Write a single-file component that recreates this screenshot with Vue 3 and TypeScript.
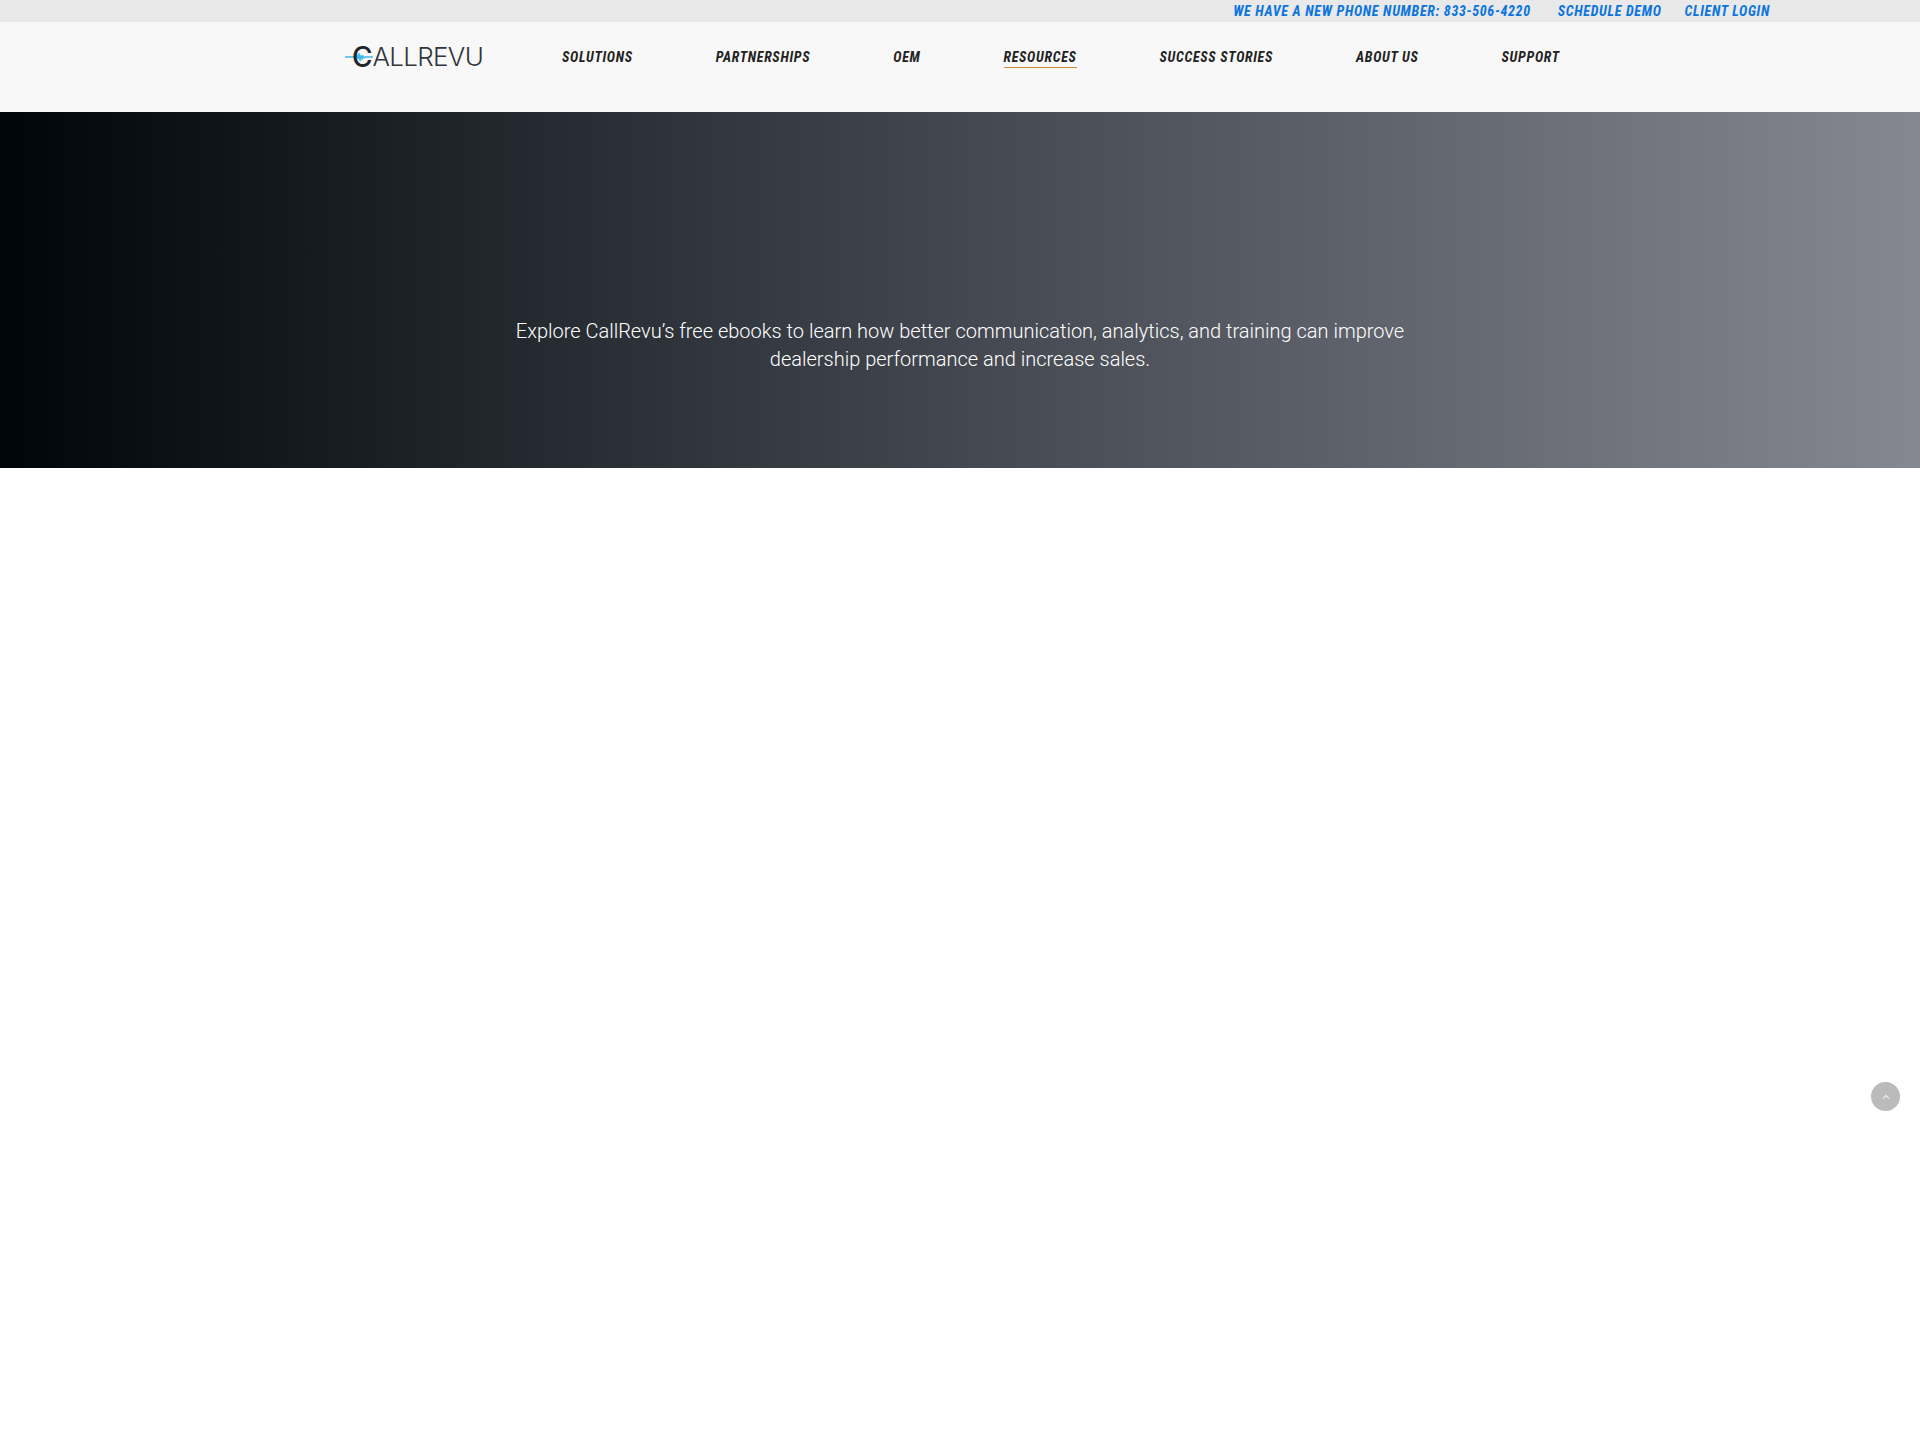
<script setup lang="ts">
const navItems: string[] = ['SOLUTIONS', 'PARTNERSHIPS', 'OEM', 'RESOURCES', 'SUCCESS STORIES', 'ABOUT US', 'SUPPORT']
</script>

<template>
  <div class="page">
    <div class="topbar">
      <a class="top-link phone">WE HAVE A NEW PHONE NUMBER: 833-506-4220</a>
      <a class="top-link demo">SCHEDULE DEMO</a>
      <a class="top-link">CLIENT LOGIN</a>
    </div>
    <header class="header">
      <div class="logo">
        <svg class="wave" width="36" height="14" viewBox="0 0 36 14">
          <path d="M0 7H9l1-1 1 2 1-3 1 4 1-6 1 8 1-6 1 4 1-3 1 2 1-1H28" fill="none" stroke="#3db8ee" stroke-width="1.3" />
        </svg>
        <span class="logo-c">C</span><span class="logo-rest">ALLREVU</span>
      </div>
      <nav class="nav">
        <a v-for="item in navItems" :key="item" class="nav-item" :class="{ active: item === 'RESOURCES' }">{{ item }}</a>
      </nav>
    </header>
    <section class="hero">
      <p class="hero-text">Explore CallRevu’s free ebooks to learn how better communication, analytics, and training can improve<br />dealership performance and increase sales.</p>
    </section>
    <button class="to-top" aria-label="Back to top">
      <svg width="8" height="6" viewBox="0 0 8 6"><path d="M1 4.500 4 1.500 7 4.500" fill="none" stroke="#eee" stroke-width="1.200" /></svg>
    </button>
  </div>
</template>

<style>
html, body { background: #fff; }
</style>

<style scoped>
.page {
  min-height: 1431px;
  background: #fff;
  font-family: Roboto, "Liberation Sans", sans-serif;
}
.topbar {
  height: 22px;
  background: #e9e9e9;
  display: flex;
  justify-content: flex-end;
  align-items: center;
  padding-right: 150px;
  gap: 23px;
}
.top-link {
  font-size: 14px;
  font-weight: 700;
  font-style: italic;
  font-stretch: 75%;
  letter-spacing: 0.7px;
  color: #0a74e0;
}
.phone { margin-right: 4px; }
.header {
  height: 90px;
  background: #f8f8f8;
  display: flex;
  padding-left: 345px;
}
.logo {
  position: relative;
  width: 217px;
  height: 30px;
  margin-top: 20px;
  display: flex;
  align-items: center;
  color: #33363a;
  font-family: Inter, sans-serif;
  font-size: 26px;
  font-weight: 300;
  line-height: 30px;
}
.wave { position: absolute; left: 0; top: 8px; }
.logo-c { position: relative; font-weight: 500; color: #22252a; margin-left: 7px; font-size: 28px; }
.logo-rest { position: relative; letter-spacing: -0.7px; }
.nav {
  display: flex;
  gap: 83px;
  align-items: flex-start;
  padding-top: 27px;
}
.nav-item {
  font-size: 14px;
  font-weight: 700;
  font-style: italic;
  font-stretch: 75%;
  letter-spacing: 0.7px;
  line-height: 16px;
  padding-bottom: 2px;
  color: #222;
  border-bottom: 1px solid transparent;
}
.nav-item.active { border-bottom-color: #c8902a; }
.hero {
  height: 356px;
  background: linear-gradient(90deg, #00040b 0%, #21262d 25%, #43474f 50%, #858891 100%);
  display: flex;
  justify-content: center;
  padding-top: 205px;
  box-sizing: border-box;
}
.hero-text {
  margin: 0;
  color: #fff;
  font-size: 20px;
  font-weight: 300;
  line-height: 28px;
  text-align: center;
}
.to-top {
  position: fixed;
  right: 20px;
  top: 1082px;
  width: 29px;
  height: 29px;
  border: 0;
  padding: 0;
  border-radius: 50%;
  background: #bbb;
  display: flex;
  align-items: center;
  justify-content: center;
}
</style>
